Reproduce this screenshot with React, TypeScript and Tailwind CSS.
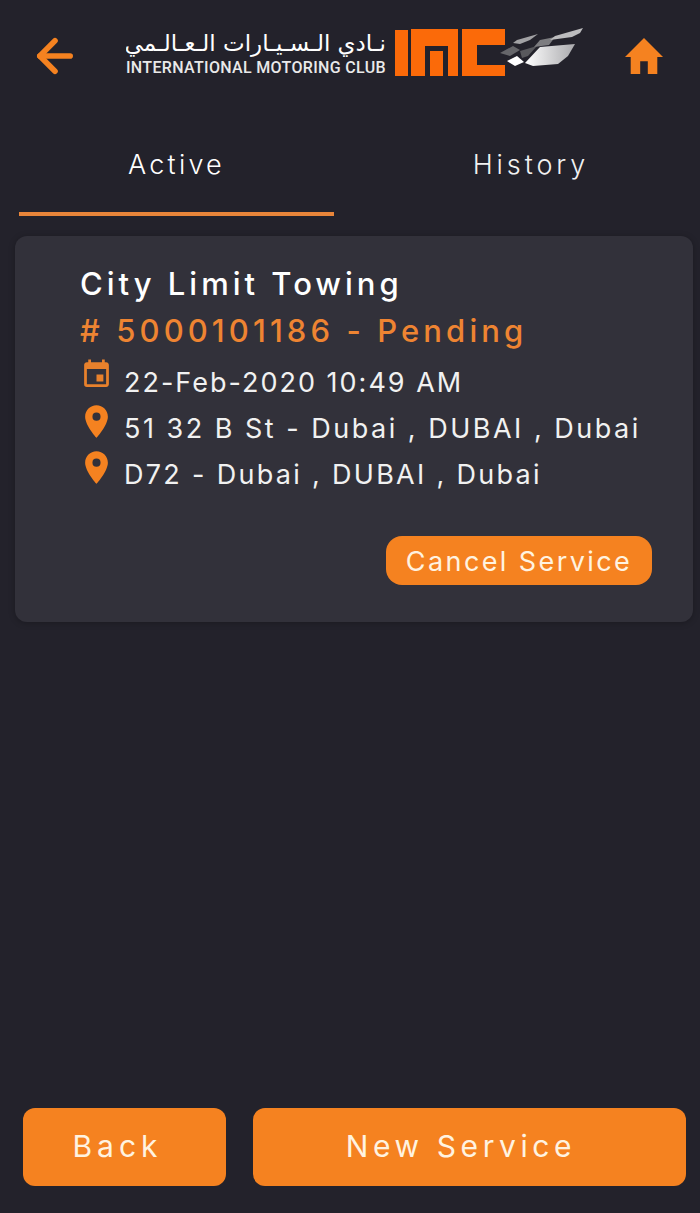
import { ArrowLeft } from 'lucide-react';
import { MdEvent, MdLocationOn } from 'react-icons/md';

function Logo() {
  return (
    <div className="flex items-start w-[458px]">
      <div className="w-[268px] flex flex-col items-start">
        <div dir="rtl" className="w-[260px] h-[31px] text-white text-[23px] leading-[31px] whitespace-nowrap overflow-hidden font-['DejaVu_Sans',sans-serif]">
          نـادي الـسـيـارات الـعـالـمي
        </div>
        <div className="text-[#e9e9e9] text-[16px] leading-[18px] font-medium tracking-[0.33px] whitespace-nowrap font-['Roboto',sans-serif]">
          INTERNATIONAL MOTORING CLUB
        </div>
      </div>
      <svg width="190" height="50" viewBox="0 0 190 50" fill="none">
        <defs>
          <linearGradient id="flagShine" x1="0" y1="0" x2="1" y2="0">
            <stop offset="0" stopColor="#ffffff" />
            <stop offset="1" stopColor="#a9a9ac" />
          </linearGradient>
        </defs>
        <g fill="#fb6a09">
          <rect x="1" y="2" width="13" height="46" />
          <path d="M17 1h47v47H54V18H31v30H17z" />
          <rect x="36" y="23" width="13" height="25" />
          <path d="M68 1h43v16H83v20h28v11H68z" />
        </g>
        <path d="M106 25l13-7 7 4-10 6z" fill="#66666a" />
        <path d="M126 23l17-5-9 10-6 2z" fill="#59595d" />
        <path d="M123 12l21-6-8 6-10 4-7-1z" fill="#a2a2a5" />
        <path d="M146 12l15-3-6 8-15 2z" fill="#7d7d80" />
        <path d="M161 8l28-8-3 5-8 4-22 3z" fill="#bcbcbe" />
        <path d="M113 33l10-5 7 6-9 4z" fill="#ffffff" />
        <path d="M146 19l35-3-7 12-10 8-25 2-8-3z" fill="url(#flagShine)" />
      </svg>
    </div>
  );
}

function Row({ icon, text, tracking }: { icon: React.ReactNode; text: string; tracking: string }) {
  return (
    <div className="flex items-start h-[46px]">
      <span className="w-[44px] flex justify-center -ml-[6px] mr-[6px]">{icon}</span>
      <span className={`text-[27px] leading-[54px] text-[#f1f1f1] whitespace-nowrap ${tracking}`}>{text}</span>
    </div>
  );
}

export default function App() {
  return (
    <div className="w-[700px] h-[1213px] flex flex-col bg-[#23222b] font-['Inter',sans-serif]">
      <header className="h-[112px] flex items-center pl-[29px] pr-[37px]">
        <ArrowLeft size={52} strokeWidth={2.6} className="text-[#f58220]" />
        <div className="ml-[45px] -mt-[6px]">
          <Logo />
        </div>
        <svg viewBox="2 3 20 17" preserveAspectRatio="none" className="ml-auto -mt-[1px] w-[38px] h-[36px]" fill="#f58220">
          <path d="M10 20v-6h4v6h5v-8h3L12 3 2 12h3v8z" />
        </svg>
      </header>
      <nav className="h-[104px] flex pl-[19px]">
        <div className="w-[315px] flex flex-col border-b-4 border-[#e8853a]">
          <span className="flex-1 text-center text-white text-[27px] leading-[106px] h-[99px] tracking-[3.2px] font-light">Active</span>
        </div>
        <div className="flex-1 pl-[28px] text-center text-[#f1f1f1] text-[27px] leading-[106px] tracking-[3.9px] font-light">History</div>
      </nav>
      <section className="mt-[20px] ml-[15px] w-[678px] h-[386px] rounded-xl bg-[#32313a] shadow-[0_1px_6px_rgba(0,0,0,0.25)] pl-[65px] pt-[26px] pr-[41px]">
        <h2 className="text-white text-[31px] leading-[44px] tracking-[4px] font-medium">City Limit Towing</h2>
        <p className="text-[#ee8432] text-[31px] leading-[50px] tracking-[4.1px] font-medium">
          # 5000101186 - Pending
        </p>
        <div className="flex flex-col">
          <Row icon={<MdEvent size={33} className="text-[#e8812c] mt-[2px]" />} text="22-Feb-2020 10:49 AM" tracking="tracking-[2px]" />
          <Row icon={<MdLocationOn size={39} className="text-[#f58220]" />} text="51 32 B St - Dubai , DUBAI , Dubai" tracking="tracking-[2.5px]" />
          <Row icon={<MdLocationOn size={39} className="text-[#f58220]" />} text="D72 - Dubai , DUBAI , Dubai" tracking="tracking-[2.3px]" />
        </div>
        <div className="flex justify-end mt-[42px]">
          <button className="w-[266px] h-[49px] pt-[3px] rounded-2xl bg-[#f58220] text-[#fff3e0] text-[27px] tracking-[2.4px]">Cancel Service</button>
        </div>
      </section>
      <footer className="mt-auto mb-[27px] flex gap-[27px] pl-[23px] pr-[14px]">
        <button className="w-[203px] h-[78px] pr-[14px] pb-[2px] rounded-xl bg-[#f58220] text-[#fff3e0] text-[30px] tracking-[5px]">Back</button>
        <button className="flex-1 h-[78px] pr-[17px] pb-[2px] rounded-xl bg-[#f58220] text-[#fff3e0] text-[30px] tracking-[4.6px]">New Service</button>
      </footer>
    </div>
  );
}
